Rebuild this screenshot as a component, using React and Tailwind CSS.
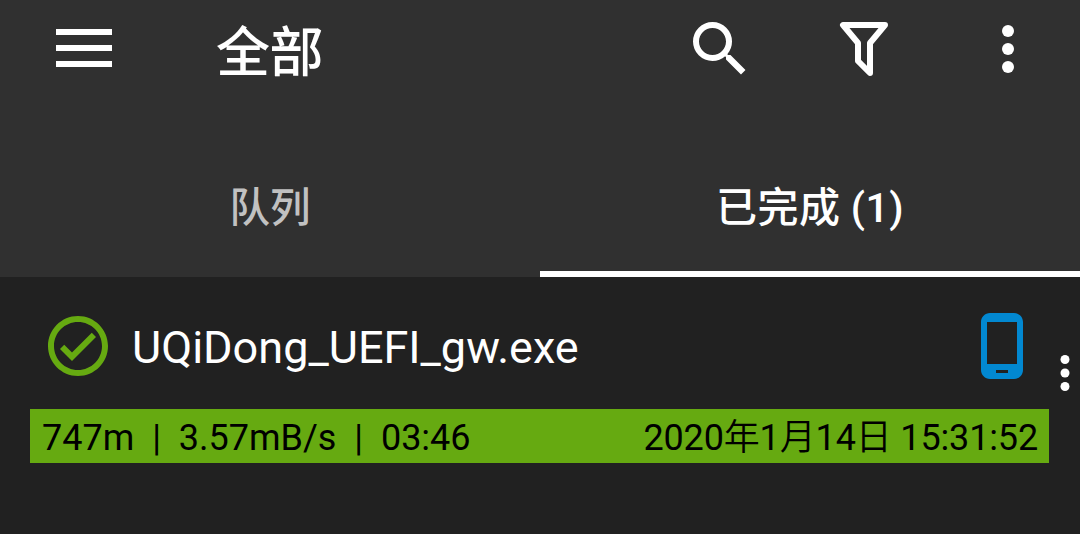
function MoreDots({ className }) {
  return (
    <svg viewBox="0 0 24 24" fill="currentColor" className={className}>
      <circle cx="12" cy="6" r="2" />
      <circle cx="12" cy="12" r="2" />
      <circle cx="12" cy="18" r="2" />
    </svg>
  );
}

function Toolbar() {
  return (
    <div className="flex h-24 items-start">
      <button className="mt-[29px] ml-14 flex w-14 flex-col gap-[10px]">
        <span className="h-[6px] w-full bg-white" />
        <span className="h-[6px] w-full bg-white" />
        <span className="h-[6px] w-full bg-white" />
      </button>
      <h1 className="mt-[14px] ml-[104px] flex-1 text-[54px] leading-[80px] font-medium tracking-[-0.5px]">全部</h1>
      <button className="mt-[13px] mr-[72px]">
        <svg viewBox="0 0 24 24" fill="currentColor" className="size-[72px]">
          <path d="M15.5 14h-.79l-.28-.27A6.471 6.471 0 0 0 16 9.5 6.5 6.5 0 1 0 9.5 16c1.61 0 3.09-.59 4.23-1.57l.27.28v.79l5 4.99L20.49 19l-4.99-5zm-6 0C7.01 14 5 11.99 5 9.5S7.01 5 9.5 5 14 7.01 14 9.5 11.99 14 9.5 14z" />
        </svg>
      </button>
      <button className="mt-[13px] mr-[72px]">
        <svg viewBox="0 0 72 72" fill="none" stroke="currentColor" strokeWidth="6" strokeLinejoin="round" className="size-[72px]">
          <path d="M15 12H57L42 30V60L30 48V30Z" />
        </svg>
      </button>
      <button className="mt-[13px] mr-9">
        <MoreDots className="size-[72px]" />
      </button>
    </div>
  );
}

function Tabs() {
  return (
    <div className="grid h-[181px] grid-cols-2 text-center leading-[60px] font-medium">
      <button className="flex flex-col items-center border-b-[6px] border-transparent pt-[82px] text-[40.5px] text-[#c1c1c1]">队列</button>
      <button className="flex flex-col items-center border-b-[6px] border-white pt-[82px] text-[41px] tracking-[0.4px]">已完成 (1)</button>
    </div>
  );
}

function DownloadItem() {
  return (
    <div className="flex flex-1">
      <div className="w-[1049px] shrink-0">
        <div className="flex h-[132px] items-start pt-[33px] pl-[42px]">
          <svg viewBox="0 0 24 24" fill="#66aa11" className="size-[72px]">
            <path d="M16.59 7.58L10 14.17l-2.59-2.58L6 13l4 4 8-8zM12 2C6.48 2 2 6.48 2 12s4.48 10 10 10 10-4.48 10-10S17.52 2 12 2zm0 18c-4.42 0-8-3.58-8-8s3.58-8 8-8 8 3.58 8 8-3.58 8-8 8z" />
          </svg>
          <div className="mt-[8px] ml-[18px] flex-1 text-[45px] leading-[60px] whitespace-nowrap">UQiDong_UEFI_gw.exe</div>
          <svg viewBox="0 0 24 24" fill="#0288d1" className="mr-[11px] size-[72px]">
            <path d="M16 1H8C6.34 1 5 2.34 5 4v16c0 1.66 1.34 3 3 3h8c1.66 0 3-1.34 3-3V4c0-1.66-1.34-3-3-3zm-2 20h-4v-1h4v1zm3-3H7V4h10v14z" />
          </svg>
        </div>
        <div className="ml-[30px] flex h-[54px] items-start justify-between bg-[#66aa11] pt-[2px] pr-[11px] pl-3 text-[36px] leading-[54px] whitespace-pre text-black">
          <span>{"747m  |  3.57mB/s  |  03:46"}</span>
          <span className="tracking-[-0.15px]">
            2020<span className="font-[350]">年</span>1<span className="font-[350]">月</span>14<span className="font-[350]">日</span> 15:31:52
          </span>
        </div>
      </div>
      <button className="mt-[69px] -ml-[11px] h-[54px] w-[54px] shrink-0">
        <MoreDots className="size-[54px]" />
      </button>
    </div>
  );
}

export default function App() {
  return (
    <div className="flex h-[534px] w-[1080px] flex-col overflow-hidden bg-[#212121] font-['Roboto','Noto_Sans_CJK_SC',sans-serif] text-white">
      <header className="h-[277px] bg-[#303030]">
        <Toolbar />
        <Tabs />
      </header>
      <DownloadItem />
    </div>
  );
}
